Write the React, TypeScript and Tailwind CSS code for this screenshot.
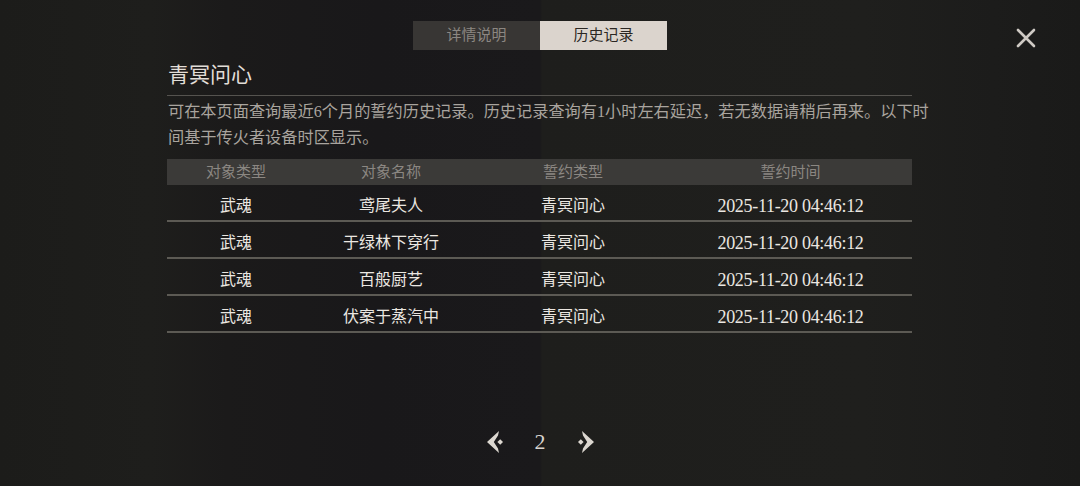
import React from 'react'

interface Record {
  kind: string
  name: string
  oath: string
  time: string
}

const records: Record[] = [
  { kind: '武魂', name: '鸢尾夫人', oath: '青冥问心', time: '2025-11-20 04:46:12' },
  { kind: '武魂', name: '于绿林下穿行', oath: '青冥问心', time: '2025-11-20 04:46:12' },
  { kind: '武魂', name: '百般厨艺', oath: '青冥问心', time: '2025-11-20 04:46:12' },
  { kind: '武魂', name: '伏案于蒸汽中', oath: '青冥问心', time: '2025-11-20 04:46:12' },
]

const cols = 'grid grid-cols-[138px_172px_192px_243px]'

function Arrow({ flip }: { flip?: boolean }) {
  return (
    <svg width="18" height="24" viewBox="0 0 18 24" className={flip ? 'scale-x-[-1]' : ''}>
      <path d="M13 1 L1 12 L13 23 L12 18.5 L7.8 12 L12 5.5 Z" fill="#dcd7d0" />
      <path d="M14.2 9.2 L17 12 L14.2 14.8 L11.4 12 Z" fill="#dcd7d0" />
    </svg>
  )
}

export default function App() {
  return (
    <div
      className="relative h-[486px] w-full overflow-hidden bg-[linear-gradient(90deg,#1c1c1a_0%,#1e1e1c_14%,#1b1a1a_21%,#19181a_35%,#1a191b_50%,#1e1e1c_50.2%,#1f1f1d_80%,#1c1c1b_92%,#1a1a19_100%)] text-[#e6e2dc]"
      style={{ fontFamily: '"Liberation Serif", "Noto Sans CJK SC", serif' }}
    >
      <button className="absolute left-[1014px] top-[26px] p-[2px]">
        <svg width="20" height="20" viewBox="0 0 20 20">
          <path d="M2 2 L18 18 M18 2 L2 18" stroke="#cfcac4" strokeWidth="2.6" strokeLinecap="round" />
        </svg>
      </button>

      <div className="flex justify-center pt-[21px]">
        <div className="flex h-[29px]">
          <div className="flex w-[127px] items-center justify-center bg-[#383634] text-[15px] text-[#8c8782]">详情说明</div>
          <div className="flex w-[127px] items-center justify-center bg-[#dbd4cd] text-[15px] text-[#2b2723]">历史记录</div>
        </div>
      </div>

      <div className="ml-[167px] w-[745px]">
        <div className="flex h-[46px] items-center border-b border-[#55534f] pt-[6px] pl-[1px] text-[21px] text-[#e2ded8]">
          青冥问心
        </div>
        <p className="mt-[3px] w-[800px] pl-[1px] text-[16.2px] leading-[26px] text-[#a9a49e]">
          可在本页面查询最近6个月的誓约历史记录。历史记录查询有1小时左右延迟，若无数据请稍后再来。以下时
          <br />
          间基于传火者设备时区显示。
        </p>

        <div className={`${cols} mt-[8px] h-[26px] items-center bg-[#3b3a38] text-[15px] text-[#8b8782]`}>
          <div className="text-center">对象类型</div>
          <div className="text-center">对象名称</div>
          <div className="text-center">誓约类型</div>
          <div className="text-center">誓约时间</div>
        </div>

        {records.map((r, i) => (
          <div key={i} className={`${cols} h-[37px] items-center border-b-2 border-[#5c5a54] pt-[7px] text-[16px] text-[#ebe7e1]`}>
            <div className="text-center">{r.kind}</div>
            <div className="text-center">{r.name}</div>
            <div className="text-center">{r.oath}</div>
            <div className="text-center text-[18px] tracking-[-0.3px]">{r.time}</div>
          </div>
        ))}
      </div>

      <div className="mt-[97px] flex items-center justify-center gap-[31px]">
        <Arrow />
        <span className="text-[22px] leading-[24px] text-[#d8d4ce]">2</span>
        <Arrow flip />
      </div>
    </div>
  )
}
